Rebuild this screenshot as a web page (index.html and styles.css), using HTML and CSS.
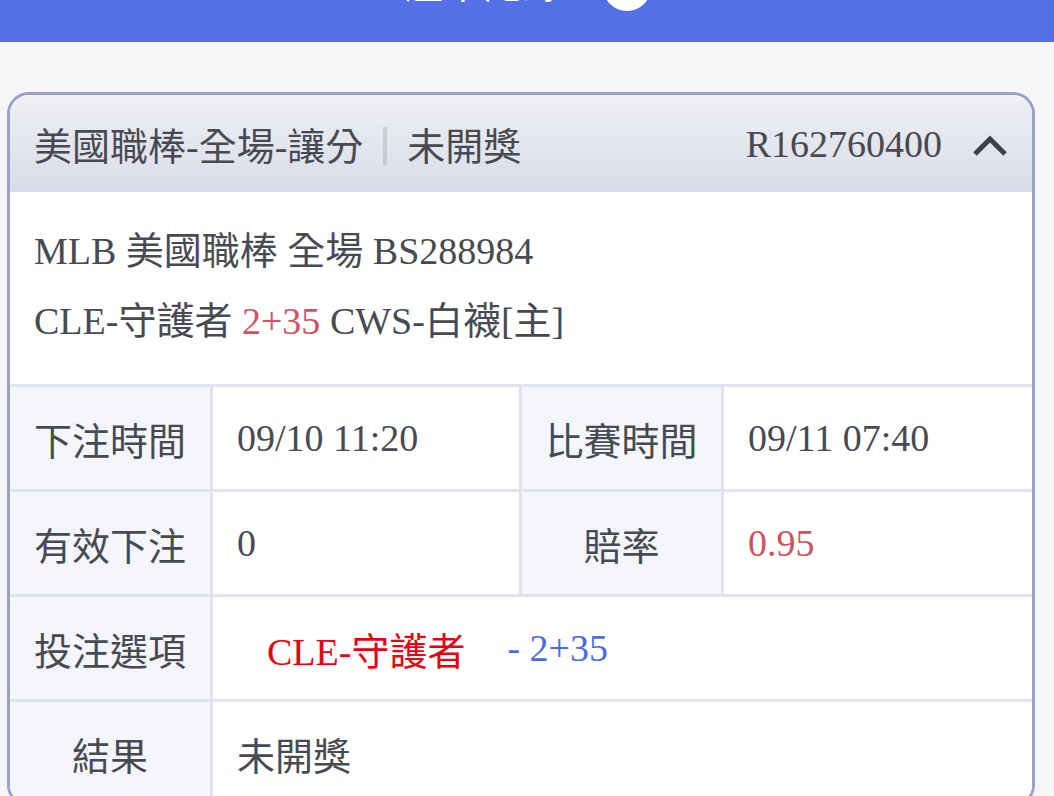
FILE: index.html
```html
<!DOCTYPE html>
<html lang="zh-Hant">
<head>
  <meta charset="UTF-8" />
  <meta name="viewport" content="width=device-width, initial-scale=1.0"/>
  <title>注單記錄</title>
  <link rel="stylesheet" href="styles.css">
</head>
<body>
  <header class="topbar">
    <div class="topbar-title">
      <span class="title-text">注單記錄</span>
      <span class="title-icon"></span>
    </div>
  </header>

  <main class="page">
    <section class="bet-card">
      <div class="bet-head">
        <div class="bet-type">美國職棒-全場-讓分<span class="divider"></span>未開獎</div>
        <div class="bet-no">
          R162760400
          <svg class="chevron" width="36" height="24" viewBox="0 0 36 24">
            <path d="M3 21 L18 6 L33 21" fill="none" stroke="#3f4148" stroke-width="5"/>
          </svg>
        </div>
      </div>

      <div class="bet-match">
        <p>MLB 美國職棒 全場 BS288984</p>
        <p>CLE-守護者 <span class="hcap">2+35</span> CWS-白襪[主]</p>
      </div>

      <div class="bet-table">
        <div class="cell label">下注時間</div>
        <div class="cell">09/10 11:20</div>
        <div class="cell label">比賽時間</div>
        <div class="cell">09/11 07:40</div>

        <div class="cell label">有效下注</div>
        <div class="cell">0</div>
        <div class="cell label">賠率</div>
        <div class="cell odds">0.95</div>

        <div class="cell label">投注選項</div>
        <div class="cell wide">
          <span class="pick">CLE-守護者</span>
          <span class="pick-line">- 2+35</span>
        </div>

        <div class="cell label">結果</div>
        <div class="cell wide">未開獎</div>
      </div>
    </section>
  </main>
</body>
</html>
```

FILE: styles.css
```css
body {
  margin: 0;
  background: #f6f6f6;
  font-family: "Liberation Serif", "Noto Sans CJK TC", serif;
  font-size: 38px;
  color: #484a52;
}

.topbar {
  height: 42px;
  overflow: hidden;
  background: #5570e6;
}

.topbar-title {
  display: flex;
  align-items: center;
  justify-content: center;
  gap: 40px;
  height: 58px;
  margin-top: -42px;
  font-family: "Noto Sans CJK TC", sans-serif;
  font-size: 40px;
  color: #fff;
}

.title-text {
  margin-bottom: 12px;
}

.title-icon {
  width: 48px;
  height: 48px;
  border-radius: 50%;
  background: #fff;
}

.page {
  padding: 50px 19px 0 7px;
}

.bet-card {
  background: #fff;
  border: 3px solid #9ea1c6;
  border-radius: 22px;
  overflow: hidden;
}

.bet-head {
  display: flex;
  align-items: center;
  justify-content: space-between;
  height: 97px;
  padding: 0 24px 0 24px;
  background: linear-gradient(#eff0f5, #d9dce8);
}

.bet-type {
  display: flex;
  align-items: center;
}

.divider {
  display: inline-block;
  width: 4px;
  height: 38px;
  margin: 4px 20px 0;
  background: #cbccd2;
}

.bet-no {
  display: flex;
  align-items: center;
  gap: 30px;
}

.chevron {
  display: block;
  margin-top: 2px;
}

.bet-match {
  padding: 24px 24px 28px;
}

.bet-match p {
  margin: 0;
  line-height: 70px;
}

.hcap {
  color: #cf5260;
}

.bet-table {
  display: grid;
  grid-template-columns: 200px 306px 199px 1fr;
  gap: 3px;
  border-top: 3px solid #e0e3ef;
  background: #e0e3ef;
}

.cell {
  display: flex;
  align-items: center;
  height: 102px;
  padding: 0 24px;
  background: #fff;
}

.cell.label {
  justify-content: center;
  padding: 0;
  background: #f5f6fb;
}

.cell.wide {
  grid-column: 2 / 5;
}

.odds {
  color: #cf5260;
}

.pick {
  margin-left: 30px;
  color: #e8000e;
}

.pick-line {
  margin-left: 42px;
  color: #4d6be0;
}
```
